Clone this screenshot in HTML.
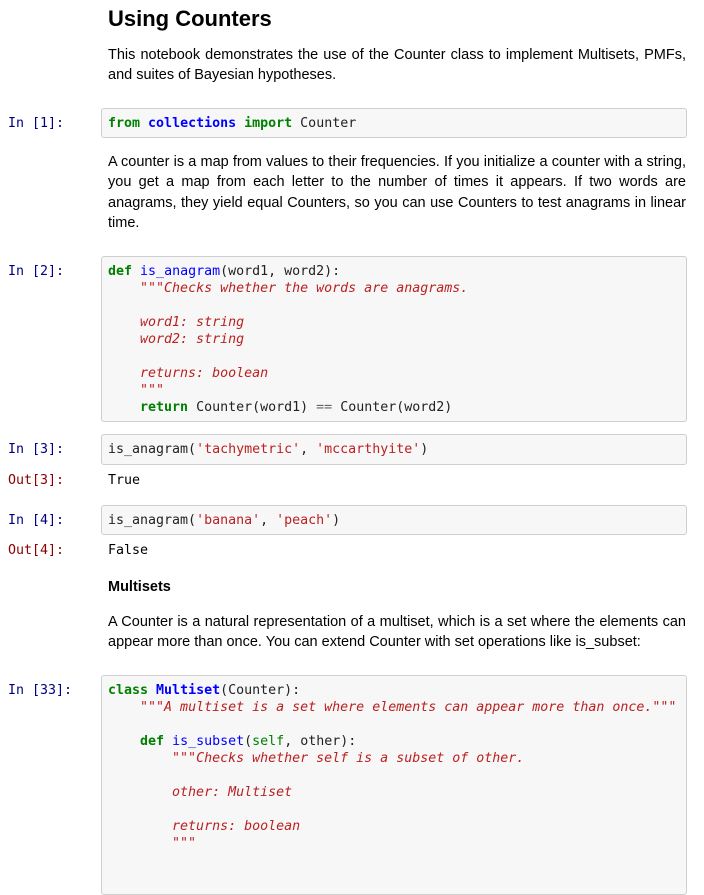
<!DOCTYPE html>
<html><head><meta charset="utf-8"><style>
body{margin:0;width:704px;height:853px;overflow:hidden;background:#fff;font-family:"Liberation Sans",sans-serif;color:#000;position:relative}
.a{position:absolute}
.p{left:108px;width:578px;font-size:14.5px;line-height:20.3px;text-align:justify}
.pr{left:8px;font-family:"DejaVu Sans Mono",monospace;font-size:13.3px;line-height:17px;color:#000080}
.po{color:#8b0000}
.box{left:101px;width:586px;background:#f7f7f7;border:1px solid #cfcfcf;border-radius:3px;box-sizing:border-box}
pre{margin:0;position:absolute;left:108px;font-family:"DejaVu Sans Mono",monospace;font-size:13.3px;line-height:17px;color:#222}
.k{color:#008000;font-weight:bold}.n{color:#0000ff;font-weight:bold}.f{color:#0000ff}.s{color:#ba2121}.d{color:#ba2121;font-style:italic}.o{color:#666}.b{color:#008000}
</style></head><body>
<div class="a" style="left:108px;top:5px;font-size:22px;font-weight:bold;line-height:28px">Using Counters</div>
<div class="a p" style="top:45px">This notebook demonstrates the use of the Counter class to implement Multisets, PMFs, and suites of Bayesian hypotheses.</div>

<div class="a pr" style="top:115px">In&nbsp;[1]:</div>
<div class="a box" style="top:108px;height:30px"></div>
<pre style="top:115px"><span class="k">from</span> <span class="n">collections</span> <span class="k">import</span> Counter</pre>

<div class="a p" style="top:152px">A counter is a map from values to their frequencies. If you initialize a counter with a string, you get a map from each letter to the number of times it appears. If two words are anagrams, they yield equal Counters, so you can use Counters to test anagrams in linear time.</div>

<div class="a pr" style="top:263px">In&nbsp;[2]:</div>
<div class="a box" style="top:256px;height:166px"></div>
<pre style="top:263px"><span class="k">def</span> <span class="f">is_anagram</span>(word1, word2):
    <span class="d">"""Checks whether the words are anagrams.

    word1: string
    word2: string

    returns: boolean
    """</span>
    <span class="k">return</span> Counter(word1) <span class="o">==</span> Counter(word2)</pre>

<div class="a pr" style="top:441px">In&nbsp;[3]:</div>
<div class="a box" style="top:434px;height:31px"></div>
<pre style="top:441px">is_anagram(<span class="s">'tachymetric'</span>, <span class="s">'mccarthyite'</span>)</pre>
<div class="a pr po" style="top:472px">Out[3]:</div>
<pre style="top:472px;color:#000">True</pre>

<div class="a pr" style="top:512px">In&nbsp;[4]:</div>
<div class="a box" style="top:505px;height:30px"></div>
<pre style="top:512px">is_anagram(<span class="s">'banana'</span>, <span class="s">'peach'</span>)</pre>
<div class="a pr po" style="top:542px">Out[4]:</div>
<pre style="top:542px;color:#000">False</pre>

<div class="a" style="left:108px;top:578px;font-size:14.5px;font-weight:bold;line-height:18px">Multisets</div>
<div class="a p" style="top:612px">A Counter is a natural representation of a multiset, which is a set where the elements can appear more than once. You can extend Counter with set operations like is_subset:</div>

<div class="a pr" style="top:682px">In&nbsp;[33]:</div>
<div class="a box" style="top:675px;height:220px"></div>
<pre style="top:682px"><span class="k">class</span> <span class="n">Multiset</span>(Counter):
    <span class="d">"""A multiset is a set where elements can appear more than once."""</span>

    <span class="k">def</span> <span class="f">is_subset</span>(<span class="b">self</span>, other):
        <span class="d">"""Checks whether self is a subset of other.

        other: Multiset

        returns: boolean
        """</span></pre>
</body></html>
